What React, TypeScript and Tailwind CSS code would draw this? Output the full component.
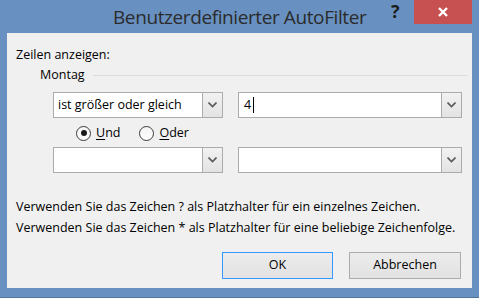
function Chevron() {
  return (
    <svg width="9" height="6" viewBox="0 0 9 6" className="block">
      <polyline points="0.5,0.5 4.5,4.5 8.5,0.5" fill="none" stroke="#5a5a5a" strokeWidth="1.6" />
    </svg>
  );
}

function Combo({ width, children }: { width: string; children?: React.ReactNode }) {
  return (
    <div className={`${width} h-[26px] flex border border-[#ababab] bg-white`}>
      <div className="flex-1 flex items-center pl-[4px] text-black">{children}</div>
      <div className="w-[20px] h-full flex items-center justify-center border-l border-[#acacac] bg-gradient-to-b from-[#f2f2f2] to-[#e3e3e3]">
        <Chevron />
      </div>
    </div>
  );
}

function Radio({ checked, label, hot }: { checked?: boolean; label: string; hot: string }) {
  return (
    <div className="flex items-center gap-[5px]">
      <div className="w-[15px] h-[15px] rounded-full border border-[#3c3c3c] bg-gradient-to-b from-[#f4f4f4] to-white flex items-center justify-center">
        {checked && <div className="w-[6px] h-[6px] rounded-full bg-[#1a1a1a]" />}
      </div>
      <span className="text-black">
        <span className="underline underline-offset-2">{hot}</span>
        {label.slice(hot.length)}
      </span>
    </div>
  );
}

export default function App() {
  return (
    <div className="w-[479px] h-[298px] bg-[#6891c1] flex flex-col font-['Open_Sans',sans-serif] border-b border-[#4f74a0]">
      <div className="h-[33px] relative flex">
        <div className="absolute left-[113px] top-[3px] text-[19px] tracking-[-0.4px] text-[#2b2b2b]">
          Benutzerdefinierter AutoFilter
        </div>
        <div className="absolute left-[391px] top-[-2px] text-[18px] font-bold text-[#1e1e1e]">?</div>
        <div className="absolute left-[414px] top-0 w-[58px] h-[24px] bg-[#c75050] flex items-center justify-center">
          <svg width="12" height="10" viewBox="0 0 12 10">
            <path d="M2 1 L10 9 M10 1 L2 9" stroke="white" strokeWidth="2.4" />
          </svg>
        </div>
      </div>
      <div className="mx-[7px] h-[255px] bg-[#f0f0f0] flex flex-col pl-[9px] text-[12.5px] text-black">
        <div className="mt-[14px] leading-[16px]">Zeilen anzeigen:</div>
        <div className="mt-[4px] ml-[24px] flex items-center gap-[8px] leading-[16px]">
          <span>Montag</span>
          <div className="flex-1 h-px bg-[#dcdcdc] mr-[4px]" />
        </div>
        <div className="mt-[9px] ml-[37px] flex gap-[15px]">
          <Combo width="w-[170px]">ist größer oder gleich</Combo>
          <Combo width="w-[224px]">
            <span className="pl-[1px]">4</span>
            <span className="ml-[2px] w-px h-[16px] bg-black" />
          </Combo>
        </div>
        <div className="mt-[7px] ml-[60px] flex gap-[19px] h-[16px] items-center">
          <Radio checked label="Und" hot="U" />
          <Radio label="Oder" hot="O" />
        </div>
        <div className="mt-[6px] ml-[37px] flex gap-[15px]">
          <Combo width="w-[170px]" />
          <Combo width="w-[224px]" />
        </div>
        <div className="mt-[23px] leading-[21px]">
          <div>Verwenden Sie das Zeichen ? als Platzhalter für ein einzelnes Zeichen.</div>
          <div>Verwenden Sie das Zeichen * als Platzhalter für eine beliebige Zeichenfolge.</div>
        </div>
        <div className="mt-[14px] flex gap-[16px] pl-[206px]">
          <button className="w-[111px] h-[27px] border border-[#3399ff] bg-gradient-to-b from-[#ececec] to-[#e2e2e2]">
            OK
          </button>
          <button className="w-[112px] h-[27px] border border-[#acacac] bg-gradient-to-b from-[#ececec] to-[#e2e2e2]">
            Abbrechen
          </button>
        </div>
      </div>
    </div>
  );
}
